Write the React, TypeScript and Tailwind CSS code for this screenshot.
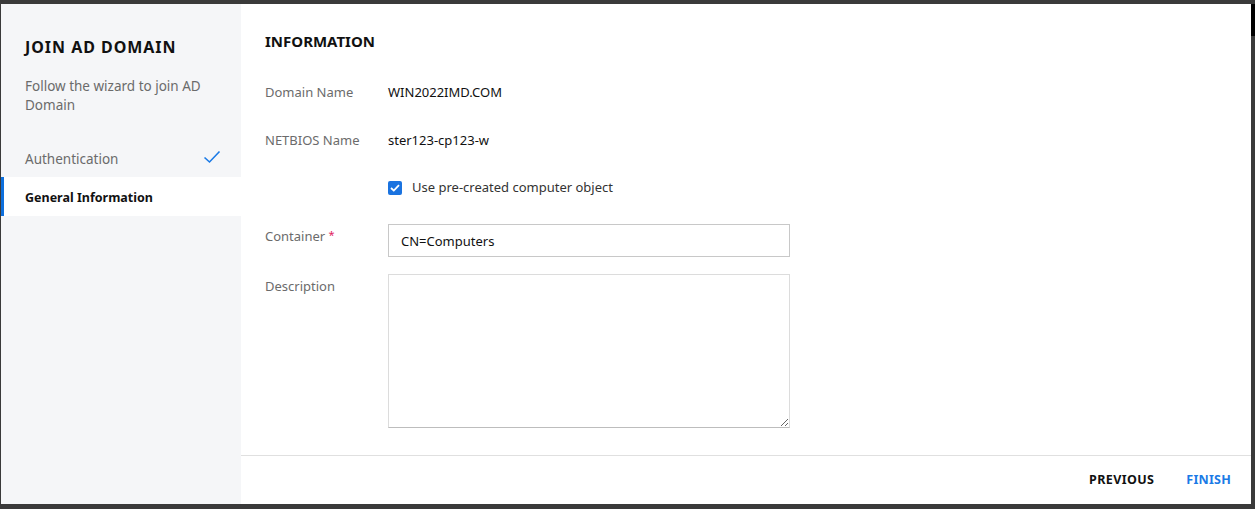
import React from "react";

export default function App() {
  const font = { fontFamily: '"Noto Sans", "Open Sans", sans-serif' };
  return (
    <div className="w-[1255px] h-[509px] bg-[#3a3a3a] pt-[4px] pl-[1px] pr-[4px] pb-[5px] relative" style={font}>
      <div className="absolute right-0 top-[4px] w-[4px] h-[32px] bg-black" />
      <div className="flex h-full w-full bg-white">
        {/* Sidebar */}
        <div className="w-[240px] shrink-0 bg-[#f5f6f8] flex flex-col">
          <div className="pl-[24px] pr-[20px] pt-[32px]">
            <h1 className="text-[16px] font-bold tracking-[0.06em] text-[#111] leading-[22px]">JOIN AD DOMAIN</h1>
            <p className="mt-[19px] text-[13.5px] leading-[19px] text-[#6b6b6b]">Follow the wizard to join AD Domain</p>
          </div>
          <div className="mt-[22px] h-[40px] pt-[4px] flex items-center justify-between pl-[24px] pr-[20px]">
            <span className="text-[13.5px] text-[#6b6b6b]">Authentication</span>
            <svg width="18" height="14" viewBox="0 0 18 14" fill="none" className="-mt-[4px]">
              <path d="M1.5 7.5 L6.5 12 L16.5 1.5" stroke="#1a7ae6" strokeWidth="1.6" />
            </svg>
          </div>
          <div className="h-[39px] pt-[3px] flex items-center bg-white border-l-[3px] border-[#0d6fdc] pl-[21px]">
            <span className="text-[12.5px] font-bold text-[#111]">General Information</span>
          </div>
        </div>
        {/* Main */}
        <div className="flex-1 flex flex-col">
          <div className="flex-1 pl-[24px] pt-[28px]">
            <h2 className="text-[15px] font-bold text-[#111] leading-[18px]">INFORMATION</h2>
            <div className="mt-[33px] flex items-center h-[20px]">
              <span className="w-[123px] text-[13px] text-[#6b6b6b]">Domain Name</span>
              <span className="text-[13px] text-[#111]">WIN2022IMD.COM</span>
            </div>
            <div className="mt-[28px] flex items-center h-[20px]">
              <span className="w-[123px] text-[13px] text-[#6b6b6b]">NETBIOS Name</span>
              <span className="text-[13px] text-[#111]">ster123-cp123-w</span>
            </div>
            <div className="mt-[27px] flex items-center h-[20px] pl-[123px]">
              <span className="w-[14px] h-[14px] rounded-[2px] bg-[#1a73e0] flex items-center justify-center">
                <svg width="10" height="8" viewBox="0 0 10 8" fill="none">
                  <path d="M1 4 L3.8 6.6 L9 1.2" stroke="white" strokeWidth="1.8" />
                </svg>
              </span>
              <span className="ml-[10px] text-[13px] text-[#333]">Use pre-created computer object</span>
            </div>
            <div className="mt-[26px] flex">
              <span className="w-[123px] text-[13px] text-[#6b6b6b] pt-[3px]">
                Container <span className="text-[#e0245e] text-[11px] align-top">*</span>
              </span>
              <div className="w-[402px] h-[33px] border border-[#c8c8c8] flex items-center pl-[12px] pt-[3px] text-[13px] text-[#111]">CN=Computers</div>
            </div>
            <div className="mt-[17px] flex">
              <span className="w-[123px] text-[13px] text-[#6b6b6b] pt-[3px]">Description</span>
              <textarea className="w-[402px] h-[154px] border border-[#dcdcdc] border-b-[#bdbdbd] resize-y outline-none" />
            </div>
          </div>
          <div className="h-[49px] shrink-0 border-t border-[#e0e0e0] flex items-center justify-end pr-[20px] gap-[32px]">
            <span className="text-[12.5px] font-bold tracking-[0.03em] text-[#111]">PREVIOUS</span>
            <span className="text-[12.5px] font-bold tracking-[0.02em] text-[#1a7ae6]">FINISH</span>
          </div>
        </div>
      </div>
    </div>
  );
}
